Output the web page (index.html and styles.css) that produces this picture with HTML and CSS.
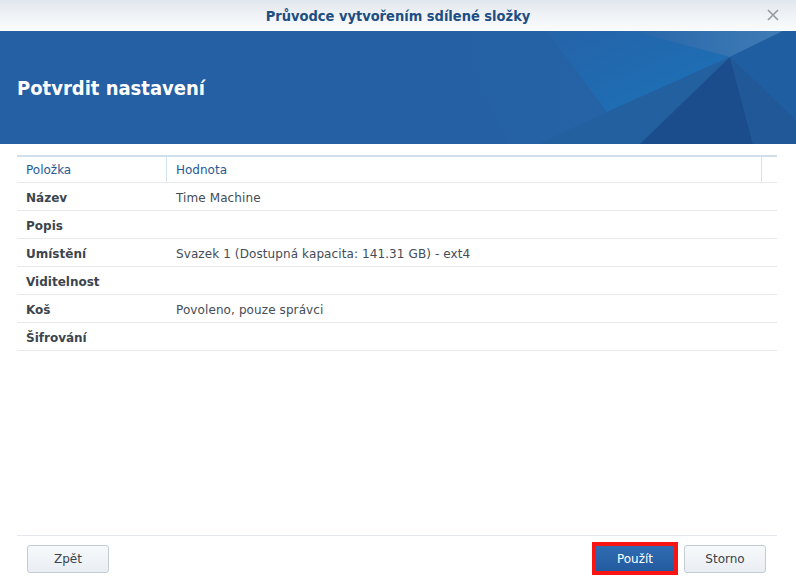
FILE: index.html
```html
<!DOCTYPE html>
<html lang="cs">
<head>
<meta charset="utf-8">
<title>Průvodce vytvořením sdílené složky</title>
<link rel="stylesheet" href="styles.css">
</head>
<body>
<div class="dialog">
  <div class="titlebar">
    <span class="title">Průvodce vytvořením sdílené složky</span>
    <span class="close">
      <svg width="12" height="12" viewBox="0 0 12 12"><path d="M1 1 L11 11 M11 1 L1 11" stroke="#959ca3" stroke-width="1.7" fill="none"/></svg>
    </span>
  </div>
  <div class="banner">
    <svg class="banner-art" width="796" height="113" viewBox="0 0 796 113" preserveAspectRatio="none">
      <defs>
        <linearGradient id="g1" x1="0" y1="0" x2="1" y2="1">
          <stop offset="0" stop-color="#2563a8"/>
          <stop offset="1" stop-color="#1b72b9"/>
        </linearGradient>
        <linearGradient id="g2" x1="0" y1="0" x2="1" y2="0">
          <stop offset="0" stop-color="#2866ab"/>
          <stop offset="1" stop-color="#3f7cb5"/>
        </linearGradient>
        <linearGradient id="g0" x1="0" y1="0" x2="1" y2="0">
          <stop offset="0" stop-color="#2560a4"/>
          <stop offset="1" stop-color="#2664a8"/>
        </linearGradient>
      </defs>
      <polygon points="450,0 796,0 796,113 510,113" fill="url(#g0)"/>
      <polygon points="547,0 633,0 730,26 607,81" fill="url(#g1)"/>
      <polygon points="633,0 783,0 730,26" fill="url(#g2)"/>
      <polygon points="607,81 730,26 640,113 540,113" fill="#22609f"/>
      <polygon points="730,26 640,113 753,113" fill="#1b4c8c"/>
      <polygon points="730,26 783,0 796,0 796,89" fill="#1f5ea1"/>
      <polygon points="730,26 796,89 796,113 753,113" fill="#215898"/>
    </svg>
    <h1 class="banner-title">Potvrdit nastavení</h1>
  </div>
  <div class="content">
    <div class="grid">
      <div class="grid-head">
        <div class="cell key head">Položka</div>
        <div class="cell val head">Hodnota</div>
        <div class="scroll-col"></div>
      </div>
      <div class="row"><div class="cell key">Název</div><div class="cell val">Time Machine</div></div>
      <div class="row"><div class="cell key">Popis</div><div class="cell val"></div></div>
      <div class="row"><div class="cell key">Umístění</div><div class="cell val">Svazek 1 (Dostupná kapacita: 141.31 GB) - ext4</div></div>
      <div class="row"><div class="cell key">Viditelnost</div><div class="cell val"></div></div>
      <div class="row"><div class="cell key">Koš</div><div class="cell val">Povoleno, pouze správci</div></div>
      <div class="row"><div class="cell key">Šifrování</div><div class="cell val"></div></div>
    </div>
  </div>
  <div class="footer">
    <button class="btn">Zpět</button>
    <div class="right">
      <span class="highlight"><button class="btn primary">Použít</button></span>
      <button class="btn">Storno</button>
    </div>
  </div>
</div>
</body>
</html>
```
FILE: styles.css
```css
* { box-sizing: border-box; }
html, body { margin: 0; padding: 0; }
body {
  width: 796px;
  height: 579px;
  background: #ffffff;
  font-family: "DejaVu Sans", Verdana, sans-serif;
  font-size: 12px;
  color: #414b55;
  overflow: hidden;
}
.dialog {
  display: flex;
  flex-direction: column;
  height: 579px;
}
.titlebar {
  height: 31px;
  flex: none;
  display: flex;
  align-items: center;
  justify-content: center;
  position: relative;
  background: linear-gradient(#e1e7ee, #f2f5f8 60%, #fafbfc);
}
.title {
  font-family: "DejaVu Sans Condensed", "DejaVu Sans", sans-serif;
  font-weight: bold;
  font-size: 14.5px;
  color: #204d82;
}
.close {
  position: absolute;
  right: 17px;
  top: 9px;
  width: 12px;
  height: 12px;
  display: flex;
}
.banner {
  height: 113px;
  flex: none;
  background: #2560a4;
  position: relative;
  display: flex;
  align-items: center;
  overflow: hidden;
}
.banner-art {
  position: absolute;
  left: 0;
  top: 0;
}
.banner-title {
  position: relative;
  margin: 0 0 0 17px;
  font-family: "DejaVu Sans Condensed", "DejaVu Sans", sans-serif;
  font-weight: bold;
  font-size: 20px;
  color: #ffffff;
}
.content {
  flex: 1;
  padding: 11px 19px 0 17px;
}
.grid {
  display: flex;
  flex-direction: column;
}
.grid-head {
  display: flex;
  height: 28px;
  border-top: 2px solid #cfdfec;
  border-bottom: 1px solid #e6e9ee;
}
.cell {
  display: flex;
  align-items: center;
  padding-left: 9px;
  white-space: nowrap;
}
.row .cell { padding-top: 2px; }
.key { width: 150px; flex: none; font-weight: bold; color: #3c454e; }
.val { flex: 1; letter-spacing: 0.1px; }
.head { font-weight: normal; color: #255a96; letter-spacing: 0; }
.grid-head .key { border-right: 1px solid #d2e2ef; }
.scroll-col {
  width: 16px;
  flex: none;
  border-left: 1px solid #d2e2ef;
}
.row {
  display: flex;
  height: 28px;
  border-bottom: 1px solid #e6e9ee;
}
.row .val { color: #444c55; }
.footer {
  flex: none;
  height: 44px;
  margin: 0 19px 0 17px;
  border-top: 1px solid #e3e6ea;
  display: flex;
  align-items: flex-start;
  justify-content: space-between;
  padding: 9px 11px 0 10px;
}
.right { display: flex; gap: 8px; }
.btn {
  width: 82px;
  height: 28px;
  border: 1px solid #c3ccd5;
  border-radius: 3px;
  background: linear-gradient(#f7f9fb, #e9eef3);
  font-family: "DejaVu Sans", Verdana, sans-serif;
  font-size: 12px;
  color: #3a424a;
  padding: 0;
  display: block;
}
.btn.primary {
  background: linear-gradient(#2f6cb2, #235a9e);
  border-color: #1f5293;
  color: #ffffff;
}
.highlight {
  position: relative;
  display: block;
}
.highlight::after {
  content: "";
  position: absolute;
  left: -2px;
  top: -3px;
  right: -2px;
  bottom: -2px;
  border: 4px solid #fb1414;
  pointer-events: none;
}
```
